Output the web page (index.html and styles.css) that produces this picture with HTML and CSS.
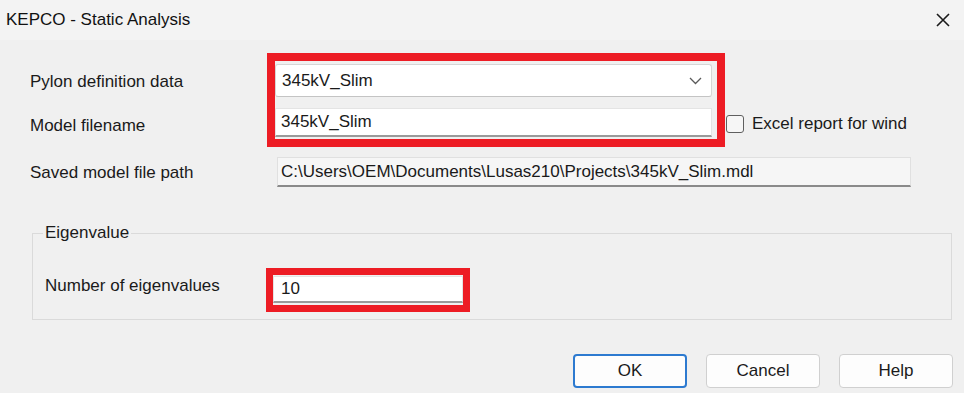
FILE: index.html
```html
<!DOCTYPE html>
<html lang="en">
<head>
  <meta charset="UTF-8" />
  <meta name="viewport" content="width=device-width, initial-scale=1.0" />
  <title>KEPCO - Static Analysis</title>
  <link rel="stylesheet" href="styles.css">
</head>

<body>
  <div class="dialog">
    <header class="titlebar">
      <span class="title">KEPCO - Static Analysis</span>
      <button class="close-btn" aria-label="Close">
        <svg width="16" height="16" viewBox="0 0 16 16">
          <path d="M2 2 L14 14 M14 2 L2 14" stroke="#1a1a1a" stroke-width="1.6" fill="none" />
        </svg>
      </button>
    </header>

    <main class="content">
      <div class="top">
        <div class="labels">
          <label class="lbl lbl-pylon">Pylon definition data</label>
          <label class="lbl lbl-model">Model filename</label>
          <label class="lbl lbl-path">Saved model file path</label>
        </div>

        <div class="fields">
          <div class="mark-row">
            <!-- красная рамка-пометка вокруг двух полей -->
            <div class="mark mark-big">
              <div class="combo">
                <span>345kV_Slim</span>
                <svg class="chevron" width="13" height="8" viewBox="0 0 13 8">
                  <path d="M1 1 L6.5 6.5 L12 1" stroke="#5a5a5a" stroke-width="1.3" fill="none" />
                </svg>
              </div>
              <div class="textbox textbox-model">345kV_Slim</div>
            </div>
            <label class="check">
              <span class="check-box"></span>
              <span>Excel report for wind</span>
            </label>
          </div>
          <div class="textbox textbox-path">C:\Users\OEM\Documents\Lusas210\Projects\345kV_Slim.mdl</div>
        </div>
      </div>

      <fieldset class="group">
        <legend>Eigenvalue</legend>
        <div class="group-row">
          <label class="lbl lbl-eigen">Number of eigenvalues</label>
          <div class="mark mark-small">
            <div class="textbox textbox-eigen">10</div>
          </div>
        </div>
      </fieldset>

      <div class="buttons">
        <button class="btn btn-default">OK</button>
        <button class="btn">Cancel</button>
        <button class="btn">Help</button>
      </div>
    </main>
  </div>
</body>
</html>
```

FILE: styles.css
```css
* {
  box-sizing: border-box;
  font-family: 'Liberation Sans', Arial, sans-serif;
}

body {
  margin: 0;
  background-color: #f0f0f0;
  color: #1a1a1a;
}

.dialog {
  width: 964px;
  height: 393px;
  background-color: #f0f0f0;
  overflow: hidden;
}

.titlebar {
  height: 40px;
  display: flex;
  align-items: center;
  justify-content: space-between;
  padding: 0 10px 0 6px;
  background-color: #f3f3f3;
}

.title {
  font-size: 17px;
  color: #111;
}

.close-btn {
  background: none;
  border: none;
  padding: 0 3px;
  display: flex;
}

.content {
  padding: 13px 12px 0 30px;
}

.top {
  display: flex;
}

.labels {
  width: 237px;
  display: flex;
  flex-direction: column;
}

.lbl {
  font-size: 17px;
  line-height: 20px;
  color: #1a1a1a;
}

.lbl-pylon {
  margin-top: 19px;
}

.lbl-model {
  margin-top: 24px;
}

.lbl-path {
  margin-top: 27px;
}

.fields {
  display: flex;
  flex-direction: column;
}

.mark-row {
  display: flex;
}

.mark {
  border: 8px solid #ed1c24;
}

.mark-big {
  display: flex;
  flex-direction: column;
  gap: 11px;
  padding: 3px 5px 2px 0;
}

.combo {
  width: 437px;
  height: 33px;
  display: flex;
  align-items: center;
  justify-content: space-between;
  padding: 0 9px 0 6px;
  background: #fff;
  border: 1px solid #d6d6d6;
  border-bottom-color: #c4c4c4;
  border-radius: 3px;
  font-size: 17px;
}

.textbox {
  display: flex;
  align-items: center;
  background: #fff;
  border: 1px solid #e4e4e4;
  border-bottom: 2px solid #9a9a9a;
  font-size: 17px;
}

.textbox-model {
  width: 437px;
  height: 29px;
  padding: 0 5px;
}

.check {
  display: flex;
  align-items: center;
  gap: 8px;
  align-self: flex-end;
  height: 29px;
  margin: 0 0 10px 1px;
  padding-top: 3px;
  font-size: 17px;
}

.check-box {
  width: 18px;
  height: 18px;
  border: 1px solid #5f5f5f;
  border-radius: 3px;
  background: #f6f6f6;
}

.textbox-path {
  width: 634px;
  height: 30px;
  margin: 10px 0 0 10px;
  padding: 0 3px;
  background: #f6f6f6;
  border-color: #e0e0e0;
  border-bottom-color: #8a8a8a;
}

.group {
  margin: 36px 0 0 2px;
  padding: 0 12px 7px 12px;
  border: 1px solid #dadada;
}

.group legend {
  font-size: 17px;
  line-height: 20px;
  padding: 0 2px;
  margin-left: -2px;
}

.group-row {
  display: flex;
  align-items: center;
  margin-top: 25px;
}

.lbl-eigen {
  width: 221px;
  padding-bottom: 8px;
}

.mark-small {
  border-width: 7px;
  padding: 1px 0 2px 0;
}

.textbox-eigen {
  width: 190px;
  height: 27px;
  padding: 0 7px;
}

.buttons {
  display: flex;
  justify-content: flex-end;
  gap: 19px;
  margin-top: 34px;
  padding-right: 0;
  margin-right: -1px;
}

.btn {
  width: 114px;
  height: 34px;
  font-size: 17px;
  color: #1a1a1a;
  background: #fdfdfd;
  border: 1px solid #d0d0d0;
  border-radius: 4px;
}

.btn-default {
  border: 2px solid #2d7ad0;
}
```
